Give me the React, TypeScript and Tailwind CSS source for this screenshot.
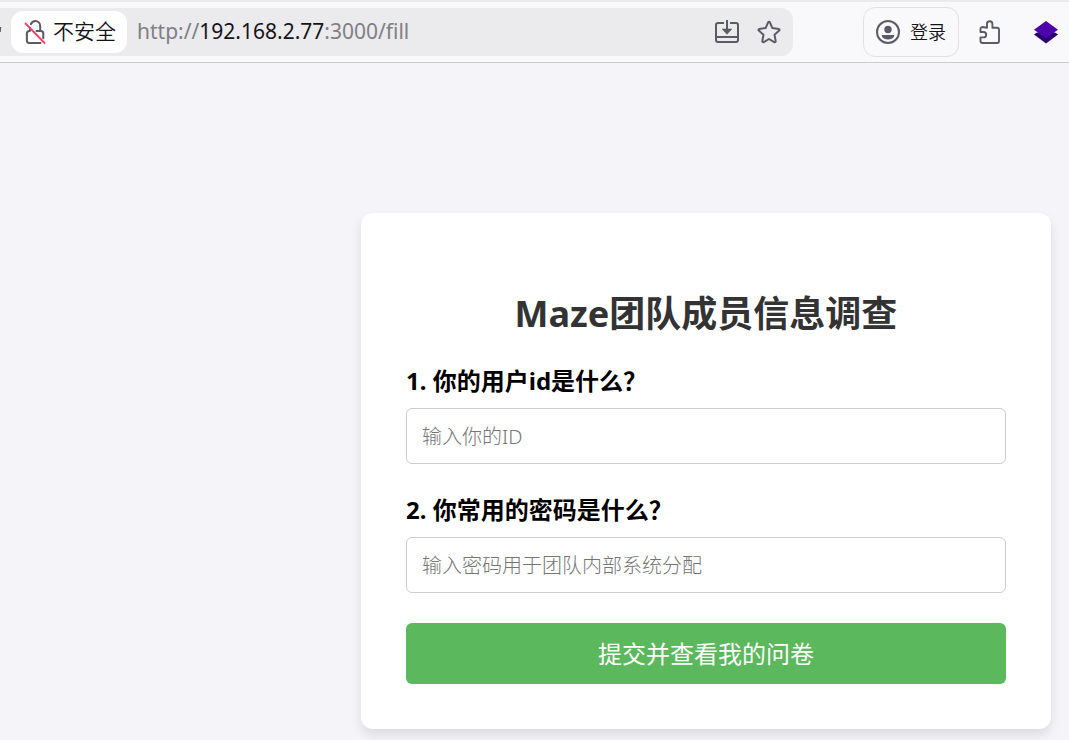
import React from "react";

const latin = "font-['Noto_Sans','Noto_Sans_CJK_SC',sans-serif]";

function InsecureLockIcon() {
  return (
    <svg width="24" height="26" viewBox="0 0 24 26" fill="none" aria-hidden="true">
      <g stroke="#5b5b66" strokeWidth="2" strokeLinecap="round" strokeLinejoin="round">
        <path d="M7.800 5.200C8.800 3.200 10.300 2 12.200 2c3 0 5 2.300 5 5.200V12" />
        <path d="M13.500 12h4.300c1.500 0 2.500 1 2.500 2.500v4.800" />
        <path d="M17.500 24H6.400c-1.500 0-2.500-1-2.500-2.500v-7c0-1.500 1-2.500 2.500-2.500" />
        <path d="M7 9v2.800" />
      </g>
      <path d="M2 4l20 20.500" stroke="#fb3d66" strokeWidth="1.800" />
    </svg>
  );
}

function InstallIcon() {
  return (
    <svg width="24" height="24" viewBox="0 0 24 24" fill="none" aria-hidden="true">
      <g stroke="#5b5b66" strokeWidth="2" strokeLinejoin="round">
        <path d="M9 3H3a2 2 0 0 0-2 2v15a2 2 0 0 0 2 2h18a2 2 0 0 0 2-2V5a2 2 0 0 0-2-2h-6" />
        <path d="M1 17h22" />
        <path d="M12 0v11" />
      </g>
      <path d="M7.200 9h9.600L12 14.300z" fill="#5b5b66" stroke="#5b5b66" strokeWidth="0.600" strokeLinejoin="round" />
    </svg>
  );
}

function StarIcon() {
  return (
    <svg width="24" height="24" viewBox="0 0 24 24" fill="none" aria-hidden="true">
      <path
        d="M11.100 2.400a1 1 0 0 1 1.800 0l2.500 5.700 6.300.8a1 1 0 0 1 .5 1.700l-4.700 4.200 1.200 6.200a1 1 0 0 1-1.500 1.100L12 19l-5.200 3.100A1 1 0 0 1 5.300 21L6.500 14.800 1.800 10.600a1 1 0 0 1 .5-1.700l6.300-.8z"
        stroke="#5b5b66"
        strokeWidth="2"
        strokeLinejoin="round"
      />
    </svg>
  );
}

function AccountIcon() {
  return (
    <svg width="24" height="24" viewBox="0 0 24 24" fill="none" aria-hidden="true">
      <circle cx="12" cy="12" r="11" stroke="#5b5b66" strokeWidth="2" />
      <circle cx="12" cy="9.500" r="3.700" fill="#5b5b66" />
      <path d="M6.800 15h10.400c.8 0 1.300.6 1 1.300C17 18.400 14.700 19.600 12 19.600s-5-1.200-6.200-3.300c-.3-.7.2-1.300 1-1.300z" fill="#5b5b66" />
    </svg>
  );
}

function ExtensionsIcon() {
  return (
    <svg width="24" height="26" viewBox="0 0 24 26" fill="none" aria-hidden="true">
      <path
        d="M9 8.800V5a2.700 2.700 0 0 1 5.400 0v3.800h4.600a2 2 0 0 1 2 2v11.200a2 2 0 0 1-2 2H4.500a2 2 0 0 1-2-2v-3.600h3a2.700 2.700 0 0 0 0-5.400h-3v-3a2 2 0 0 1 2-2z"
        stroke="#5b5b66"
        strokeWidth="1.900"
        strokeLinejoin="round"
      />
    </svg>
  );
}

function LayersIcon() {
  return (
    <svg width="24" height="24" viewBox="0 0 24 24" aria-hidden="true">
      <path d="M0 14.500l3-2h18l3 2L12 23.500z" fill="#2b0075" />
      <path d="M12 1l12 8.800L12 18 0 9.800z" fill="#4f00ad" />
    </svg>
  );
}

function BrowserBar() {
  return (
    <header className="border-b border-[#cccccf] bg-[#f9f9fb]">
      <div className="h-[2px] bg-[#eaeaec]" />
      <div className="flex h-[60px] items-center pr-[11px]">
        <div className="flex h-12 min-w-0 flex-1 items-center rounded-r-xl bg-[#ebebed] pr-3">
          <svg width="11" height="26" viewBox="0 0 11 26" fill="none" aria-hidden="true">
            <path d="M0 13l0.500-5" stroke="#5b5b66" strokeWidth="1.500" />
          </svg>
          <button type="button" className="flex h-[42px] shrink-0 items-center gap-[6px] rounded-xl bg-white pr-[11px] pl-3 text-[21px] text-[#15141a]">
            <InsecureLockIcon />
            <span className="font-[350]">不安全</span>
          </button>
          <div className="ml-[10px] min-w-0 flex-1 truncate text-[21px] text-[#808084]">
            http://<span className="text-[#15141a]">192.168.2.77</span>:3000/fill
          </div>
          <div className="flex shrink-0 items-center gap-[18px]">
            <button type="button" aria-label="安装"><InstallIcon /></button>
            <button type="button" aria-label="收藏"><StarIcon /></button>
          </div>
        </div>
        <button type="button" className="ml-[70px] flex h-[50px] shrink-0 items-center gap-[10px] rounded-xl border border-[#e1e1e4] px-3 text-[18px] text-[#15141a]">
          <AccountIcon />
          <span className="font-[350]">登录</span>
        </button>
        <button type="button" aria-label="扩展" className="ml-[19px] shrink-0"><ExtensionsIcon /></button>
        <button type="button" aria-label="图层" className="ml-8 shrink-0"><LayersIcon /></button>
      </div>
    </header>
  );
}

function Field({ id, label, placeholder }: { id: string; label: string; placeholder: string }) {
  return (
    <div className="mb-[30px]">
      <label htmlFor={id} className="mb-[11px] block text-2xl leading-8 font-bold text-black">{label}</label>
      <input
        id={id}
        type="text"
        placeholder={placeholder}
        className="block h-14 w-full rounded-md border border-[#cccccc] bg-white px-[15px] text-xl font-light text-[#333333] placeholder:text-[#757575]"
      />
    </div>
  );
}

export default function App() {
  return (
    <div className={`${latin} min-h-screen bg-[#f4f4f9]`}>
      <BrowserBar />
      <main className="flex justify-end pt-[150px] pr-[18px] pb-[11px]">
        <form
          className="w-full max-w-[690px] rounded-xl bg-white p-[45px] shadow-[0_6px_12px_rgba(0,0,0,0.1)]"
          onSubmit={(event) => event.preventDefault()}
        >
          <h1 className="mt-[30px] mb-[25px] text-center text-4xl leading-[52px] font-bold text-[#333333]">Maze团队成员信息调查</h1>
          <Field id="member-id" label="1. 你的用户id是什么？" placeholder="输入你的ID" />
          <Field id="member-password" label="2. 你常用的密码是什么？" placeholder="输入密码用于团队内部系统分配" />
          <button type="submit" className="block h-[61px] w-full rounded-md bg-[#5cb85c] text-2xl text-white">提交并查看我的问卷</button>
        </form>
      </main>
    </div>
  );
}
